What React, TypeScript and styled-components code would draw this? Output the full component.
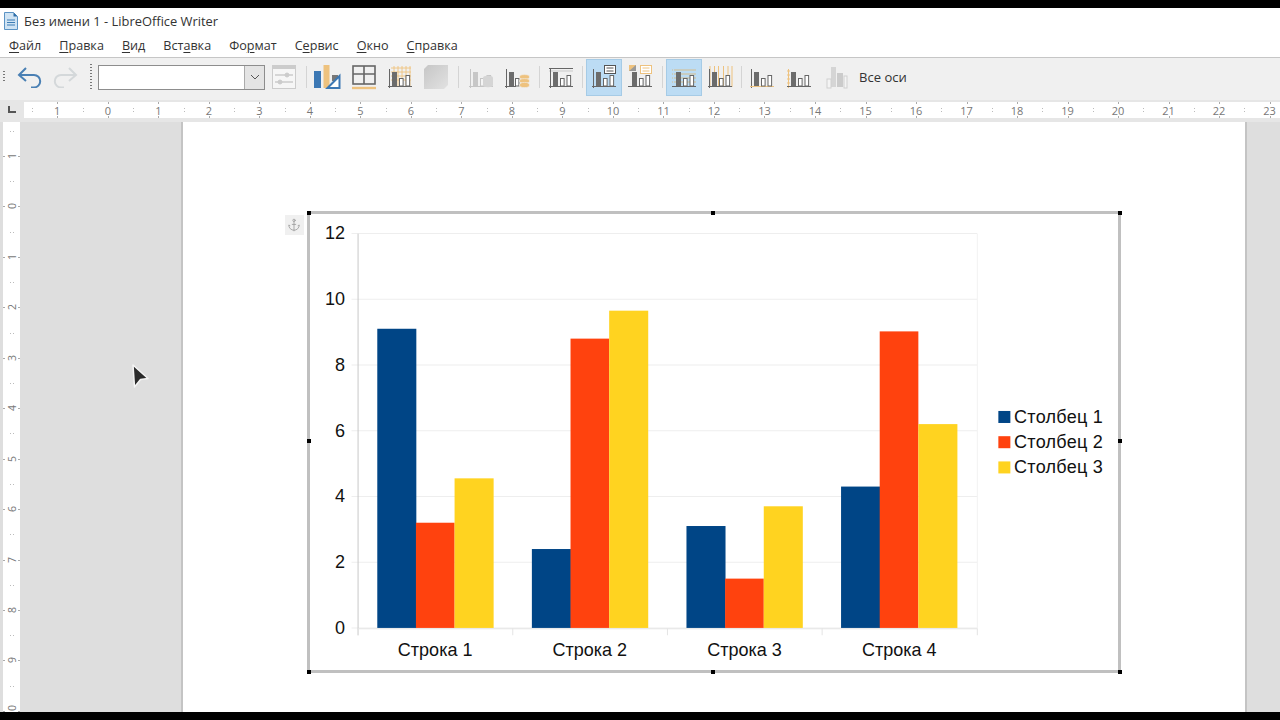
import React from "react";
import styled, { createGlobalStyle } from "styled-components";
import { Anchor } from "lucide-react";

const Global = createGlobalStyle`
  html, body { margin: 0; padding: 0; background: #000; }
  * { box-sizing: border-box; }
`;

const Root = styled.div`
  width: 1280px; height: 720px; overflow: hidden; display: flex; flex-direction: column;
  background: #000; font-family: "Open Sans", "Noto Sans", sans-serif; color: #222;
`;
const BlackBar = styled.div`height: 8px; flex: none; background: #000;`;
const TitleBar = styled.div`
  height: 26px; flex: none; background: #fff; display: flex; align-items: center; padding-left: 4px; gap: 6px;
  font-size: 12.9px; color: #333;
`;
const MenuBar = styled.div`
  height: 23px; flex: none; background: #fff; display: flex; align-items: center; padding-left: 9px; gap: 18px;
  font-size: 12.6px; color: #333;
  u { text-underline-offset: 2px; text-decoration-thickness: 1px; }
`;
const Toolbar = styled.div`
  height: 43px; flex: none; background: #f0f0f0; border-top: 1px solid #c6c6c6; display: flex; align-items: center;
  padding-bottom: 4px;
`;
const Grip = styled.div<{ $h: number; $ml: number; $mr: number }>`
  width: 2px; height: ${p => p.$h}px; margin: 0 ${p => p.$mr}px 0 ${p => p.$ml}px;
  background: repeating-linear-gradient(to bottom, #777 0 1px, transparent 1px 3px);
`;
const ToolButton = styled.div<{ $active?: boolean; $w?: number }>`
  width: ${p => p.$w ?? 36.4}px; height: 37px; flex: none; display: flex; align-items: center; justify-content: center;
  background: ${p => (p.$active ? "#bcdcf4" : "transparent")};
  border: 1px solid ${p => (p.$active ? "#a6cbe6" : "transparent")};
`;
const Sep = styled.div<{ $w: number }>`
  width: ${p => p.$w}px; height: 22px; flex: none; display: flex; justify-content: center;
  &::before { content: ""; width: 1px; background: #d4d4d4; }
`;
const Combo = styled.div`
  width: 167px; height: 25px; flex: none; background: #fff; border: 1px solid #8d8d8d; display: flex; justify-content: flex-end;
`;
const ComboArrow = styled.div`
  width: 20px; background: #e4e4e4; border-left: 1px solid #ababab; display: flex; align-items: center; justify-content: center;
`;
const AxesLabel = styled.span`font-size: 13px; color: #333; margin-left: 4px;`;

const RulerRow = styled.div`
  height: 22px; flex: none; background: #e6e6e6; display: flex; padding-top: 2px;
`;
const RulerCorner = styled.div`
  width: 24px; height: 16px; flex: none; display: flex; align-items: flex-end; padding: 0 0 5px 8px;
  &::before { content: ""; width: 6px; height: 5px; border-left: 2px solid #555; border-bottom: 2px solid #555; }
`;
const HRuler = styled.div`
  flex: 1; height: 16px; background: #fff; display: flex; padding-left: 8px; overflow: hidden;
`;
const HCell = styled.div`
  width: 50.53px; flex: none; position: relative; display: flex; align-items: center; justify-content: center;
  font-size: 11px; color: #777;
  &::before {
    content: ""; position: absolute; left: 50%; top: 0; bottom: 0; width: 1px;
    background: linear-gradient(to bottom, #aaa 0 2px, transparent 2px 14px, #aaa 14px 16px);
  }
  &::after {
    content: ""; position: absolute; left: 0; top: 6px; width: 1px; height: 4px;
    background: linear-gradient(to bottom, #bbb 0 1px, transparent 1px 3px, #bbb 3px 4px);
  }
`;
const Workspace = styled.div`
  flex: 1; min-height: 0; background: #dedede; display: flex; overflow: hidden; position: relative;
`;
const VRuler = styled.div`
  width: 17px; margin-left: 3px; flex: none; background: #fff; display: flex; flex-direction: column; padding-top: 8.8px; overflow: hidden;
`;
const VCell = styled.div`
  height: 50.45px; flex: none; position: relative; display: flex; align-items: center; justify-content: center;
  font-size: 10.5px; color: #777;
  span { writing-mode: vertical-rl; transform: rotate(180deg); white-space: nowrap; }
  &::before {
    content: ""; position: absolute; top: 50%; left: 0; right: 0; height: 1px;
    background: linear-gradient(to right, #aaa 0 2px, transparent 2px 15px, #aaa 15px 17px);
  }
  &::after {
    content: ""; position: absolute; top: 0; left: 7px; height: 1px; width: 4px;
    background: linear-gradient(to right, #bbb 0 1px, transparent 1px 3px, #bbb 3px 4px);
  }
`;
const Page = styled.div`
  width: 1062px; margin-left: 163px; flex: none; background: #fff; padding: 89px 0 0 124px;
  box-shadow: -2px 0 0 #c4c4c4, 2px 0 0 #c4c4c4;
`;
const ChartFrame = styled.div`
  width: 814px; height: 462px; position: relative; border: 3.5px solid #c0c0c0;
`;
const ChartSvg = styled.svg`display: block; width: 100%; height: 100%;`;
const Handle = styled.div<{ $x: string; $y: string }>`
  position: absolute; width: 4px; height: 4px; background: #000;
  left: calc(${p => p.$x} - 2px); top: calc(${p => p.$y} - 2px);
`;
const AnchorTag = styled.div`
  position: absolute; left: -25.5px; top: 0.5px; width: 19px; height: 20px; background: #f0f0f0;
  display: flex; align-items: center; justify-content: center; color: #9a9a9a;
`;
const Cursor = styled.svg`
  position: absolute; left: 128px; top: 238px; width: 26px; height: 30px;
`;

const ICON = { dark: "#6c6c6c", line: "#666", tan: "#eec27e", blue: "#3c78b4" };

const Bars: React.FC<{ axis?: string; base?: string }> = ({ axis = ICON.line, base = ICON.line }) => (
  <g>
    <path d="M1.5 4v19" stroke={axis} strokeWidth="1" fill="none" />
    <path d="M0 21.5h24" stroke={base} strokeWidth="1" fill="none" />
    <rect x="4" y="7" width="5" height="14" fill={ICON.dark} />
    <rect x="11.5" y="13.5" width="3.6" height="7.5" fill="#fff" stroke={ICON.line} strokeWidth="1" />
    <rect x="18" y="10.5" width="3.6" height="10.5" fill="#fff" stroke={ICON.line} strokeWidth="1" />
  </g>
);

const Ico: React.FC<{ muted?: boolean; children?: React.ReactNode }> = ({ muted, children }) => (
  <svg width="26" height="26" viewBox="0 0 26 26" opacity={muted ? 0.3 : 1}>
    <g transform="translate(1 1)">{children}</g>
  </svg>
);

const Legend: React.FC<{ stroke: string }> = ({ stroke }) => (
  <g>
    <rect x="12.5" y="0.5" width="11" height="8" fill="#fff" stroke={stroke} strokeWidth="1" />
    <path d="M14.5 3h7M14.5 6h7" stroke={stroke} strokeWidth="1" />
  </g>
);

const columns = [
  [9.1, 3.2, 4.55],
  [2.4, 8.8, 9.65],
  [3.1, 1.5, 3.7],
  [4.3, 9.02, 6.2],
];
const COLORS = ["#004586", "#ff420e", "#ffd320"];
const Y0 = 627.7;
const UNIT = 65.67 / 2;
const CAT = ["Строка 1", "Строка 2", "Строка 3", "Строка 4"];
const OX = 310.5;
const OY = 214.5;

const Chart: React.FC = () => (
  <ChartSvg viewBox={`${OX} ${OY} 807 455`} fontFamily='"Liberation Sans", Arial, sans-serif' fontSize="18" fill="#111">
    {[0, 2, 4, 6, 8, 10, 12].map(v => {
      const y = Y0 - v * UNIT;
      return (
        <g key={v}>
          <line x1="352" x2="977" y1={y} y2={y} stroke="#eeeeee" />
          <text x="345.5" y={y + 6} textAnchor="end">{v}</text>
        </g>
      );
    })}
    <line x1="358.5" x2="358.5" y1="234" y2="635" stroke="#c8c8c8" />
    <line x1="358" x2="977" y1="628.5" y2="628.5" stroke="#e4e4e4" />
    {[358.5, 513, 667.5, 822, 977].map(x => (
      <line key={x} x1={x} x2={x} y1="628" y2="635" stroke="#e4e4e4" />
    ))}
    <line x1="977" x2="977" y1="234" y2="628" stroke="#f2f2f2" />
    {columns.map((vals, c) => (
      <g key={c}>
        {vals.map((v, i) => (
          <rect key={i} x={377.7 + c * 154.4 + i * 38.6} y={Y0 - v * UNIT} width={i === 1 ? 38.6 : 39} height={v * UNIT} fill={COLORS[i]} />
        ))}
        <text x={435.5 + c * 154.5} y="656" textAnchor="middle">{CAT[c]}</text>
      </g>
    ))}
    {["Столбец 1", "Столбец 2", "Столбец 3"].map((t, i) => (
      <g key={t}>
        <rect x="998" y={411 + i * 25.2} width="12" height="12" fill={COLORS[i]} />
        <text x="1013.7" y={423 + i * 25.2} letterSpacing="0.25">{t}</text>
      </g>
    ))}
  </ChartSvg>
);

export default function App() {
  return (
    <Root>
      <Global />
      <BlackBar />
      <TitleBar>
        <svg width="14" height="18" viewBox="0 0 14 18">
          <path d="M0.5 0.5h9l4 4v13h-13z" fill="#cfe3f3" stroke="#5b93c4" />
          <path d="M9.5 0.5l4 4h-4z" fill="#2f6ea8" />
          <path d="M3 8h8M3 10.5h8M3 13h8" stroke="#3d7db5" strokeWidth="1.2" />
        </svg>
        <span>Без имени 1 - LibreOffice Writer</span>
      </TitleBar>
      <MenuBar>
        <span><u>Ф</u>айл</span>
        <span><u>П</u>равка</span>
        <span><u>В</u>ид</span>
        <span>Вст<u>а</u>вка</span>
        <span>Фо<u>р</u>мат</span>
        <span>С<u>е</u>рвис</span>
        <span><u>О</u>кно</span>
        <span><u>С</u>правка</span>
      </MenuBar>
      <Toolbar>
        <Grip $h={12} $ml={3} $mr={7} />
        <ToolButton $w={35}>
          <svg width="26" height="22" viewBox="0 0 26 22" fill="none" stroke="#4a80b4" strokeWidth="2">
            <path d="M9 2L2 9l7 6" /><path d="M2 9h15a6.2 6.2 0 0 1 0 12.4h-3" />
          </svg>
        </ToolButton>
        <ToolButton $w={36}>
          <svg width="26" height="22" viewBox="0 0 26 22" fill="none" stroke="#d4d8da" strokeWidth="2">
            <path d="M17 2l7 7-7 6" /><path d="M24 9H9a6.2 6.2 0 0 0 0 12.4h3" />
          </svg>
        </ToolButton>
        <Grip $h={27} $ml={7} $mr={6} />
        <Combo>
          <ComboArrow>
            <svg width="10" height="6" viewBox="0 0 10 6" fill="none" stroke="#555"><path d="M1 1l4 4 4-4" /></svg>
          </ComboArrow>
        </Combo>
        <ToolButton $w={38}>
          <svg width="24" height="24" viewBox="0 0 24 24" fill="none" stroke="#ccc">
            <rect x="0.5" y="0.5" width="23" height="23" fill="#f6f6f6" />
            <path d="M0 2.5h24" strokeWidth="3" />
            <path d="M3 10h18M3 17h18" strokeWidth="1.4" />
            <circle cx="15" cy="10" r="2" fill="#ccc" /><circle cx="8" cy="17" r="2" fill="#ccc" />
          </svg>
        </ToolButton>
        <Sep $w={6} />
        <ToolButton>
          <svg width="28" height="24" viewBox="0 0 28 24">
            <rect x="1" y="6" width="7" height="17" fill={ICON.blue} />
            <rect x="10.5" y="0" width="6" height="23" fill={ICON.tan} />
            <rect x="19" y="10" width="6" height="6" fill="#777" />
            <path d="M14.5 23L26.5 11v12z" fill="#fff" stroke={ICON.blue} strokeWidth="2" />
          </svg>
        </ToolButton>
        <ToolButton>
          <svg width="26" height="25" viewBox="0 0 26 25" fill="none">
            <rect x="2" y="1" width="22" height="18" stroke="#666" strokeWidth="1.6" />
            <path d="M13 1v18M2 9h22" stroke="#666" strokeWidth="1.6" />
            <path d="M1 23h24" stroke={ICON.tan} strokeWidth="2.4" />
          </svg>
        </ToolButton>
        <ToolButton>
          <Ico>
            <path d="M3 3h20M3 7h20M3 11h20M3 15h20M6 1v20M10 1v20M14 1v20M18 1v20M22 1v20" stroke={ICON.tan} strokeWidth="0.9" />
            <Bars />
          </Ico>
        </ToolButton>
        <ToolButton>
          <svg width="24" height="24" viewBox="0 0 24 24">
            <defs>
              <linearGradient id="cube" x1="0" y1="0" x2="1" y2="1">
                <stop offset="0" stopColor="#c6c6c6" /><stop offset="1" stopColor="#e2e2e2" />
              </linearGradient>
            </defs>
            <path d="M4 0h20v20l-4 4H0V4z" fill="url(#cube)" />
          </svg>
        </ToolButton>
        <Sep $w={8} />
        <ToolButton>
          <Ico muted>
            <Bars />
            <ellipse cx="19" cy="13" rx="5" ry="2.2" fill="#999" />
            <rect x="14" y="13" width="10" height="7" fill="#999" />
            <ellipse cx="19" cy="20" rx="5" ry="2.2" fill="#999" />
          </Ico>
        </ToolButton>
        <ToolButton>
          <Ico>
            <Bars />
            <rect x="11" y="12" width="14" height="12" fill="#f0f0f0" />
            <rect x="10.5" y="13.5" width="3.4" height="7.5" fill="#fff" stroke={ICON.line} />
            <ellipse cx="19.5" cy="12" rx="5" ry="2.4" fill={ICON.tan} stroke="#f0f0f0" strokeWidth="0.6" />
            <ellipse cx="19.5" cy="16" rx="5" ry="2.4" fill={ICON.tan} stroke="#f0f0f0" strokeWidth="0.6" />
            <ellipse cx="19.5" cy="20" rx="5" ry="2.6" fill={ICON.tan} stroke="#f0f0f0" strokeWidth="0.6" />
          </Ico>
        </ToolButton>
        <Sep $w={7.5} />
        <ToolButton>
          <Ico>
            <path d="M0 3.5h24" stroke={ICON.line} strokeWidth="1" />
            <path d="M0 6h24" stroke="#c9c9c9" strokeWidth="1" />
            <Bars />
          </Ico>
        </ToolButton>
        <Sep $w={6.5} />
        <ToolButton $active>
          <Ico>
            <Bars />
            <Legend stroke="#555" />
          </Ico>
        </ToolButton>
        <ToolButton>
          <Ico>
            <Bars axis="#f0f0f0" />
            <rect x="1" y="0" width="7" height="6" fill={ICON.tan} />
            <path d="M1 6l7-6v6z" fill="#999" />
            <Legend stroke={ICON.tan} />
          </Ico>
        </ToolButton>
        <Sep $w={7} />
        <ToolButton $active>
          <Ico>
            <path d="M0 5h24M0 9h24M0 13h24M0 17h24" stroke="#d6bd8c" strokeWidth="1" />
            <Bars axis="#bcdcf4" />
          </Ico>
        </ToolButton>
        <ToolButton>
          <Ico>
            <path d="M2 1v21M6.5 1v21M10.5 1v21M15.5 1v21M20 1v21M24 1v21" stroke={ICON.tan} strokeWidth="1" />
            <Bars />
          </Ico>
        </ToolButton>
        <Sep $w={6} />
        <ToolButton>
          <Ico>
            <Bars base={ICON.tan} />
          </Ico>
        </ToolButton>
        <ToolButton>
          <Ico>
            <Bars axis={ICON.tan} />
            <path d="M0 6h3M0 10h3M0 14h3M0 18h3" stroke={ICON.tan} />
          </Ico>
        </ToolButton>
        <ToolButton $w={38}>
          <Ico muted>
            <rect x="7" y="2" width="5" height="20" fill="#999" />
            <rect x="13" y="8" width="6" height="14" fill="#777" />
            <rect x="3" y="14" width="4" height="9" fill="#fff" stroke="#888" />
            <rect x="20" y="11" width="3" height="12" fill="#fff" stroke="#888" />
          </Ico>
        </ToolButton>
        <AxesLabel>Все оси</AxesLabel>
      </Toolbar>
      <RulerRow>
        <RulerCorner />
        <HRuler>
          {[1, 0, ...Array.from({ length: 23 }, (_, i) => i + 1)].map((n, i) => (
            <HCell key={i}>{n}</HCell>
          ))}
        </HRuler>
      </RulerRow>
      <Workspace>
        <VRuler>
          {[1, 0, 1, 2, 3, 4, 5, 6, 7, 8, 9, 10].map((n, i) => (
            <VCell key={i}><span>{n}</span></VCell>
          ))}
        </VRuler>
        <Page>
          <ChartFrame>
            <Chart />
            <AnchorTag><Anchor size={14} strokeWidth={1.4} /></AnchorTag>
            <Handle $x="-1.5px" $y="-1.5px" />
            <Handle $x="calc(50% - 1px)" $y="-1.5px" />
            <Handle $x="calc(100% + 1.5px)" $y="-1.5px" />
            <Handle $x="-1.5px" $y="calc(50% - 1px)" />
            <Handle $x="calc(100% + 1.5px)" $y="calc(50% - 1px)" />
            <Handle $x="-1.5px" $y="calc(100% + 1.5px)" />
            <Handle $x="calc(50% - 1px)" $y="calc(100% + 1.5px)" />
            <Handle $x="calc(100% + 1.5px)" $y="calc(100% + 1.5px)" />
          </ChartFrame>
        </Page>
        <Cursor viewBox="0 0 26 30">
          <path d="M5 5l15 13.5-7.5 1L6.5 27z" fill="#2b2b2b" stroke="#f4f4f4" strokeWidth="1.5" strokeLinejoin="round" />
        </Cursor>
      </Workspace>
      <BlackBar />
    </Root>
  );
}
